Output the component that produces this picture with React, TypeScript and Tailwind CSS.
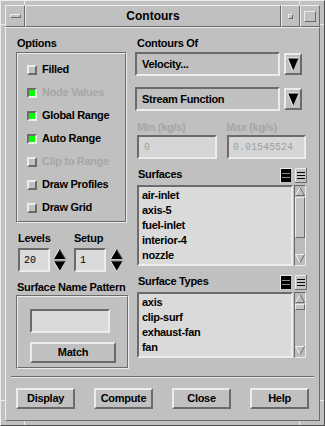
import React from 'react';

const R2 = 'border-2 border-t-[#ececec] border-l-[#ececec] border-r-[#6b6b6b] border-b-[#6b6b6b]';
const S2 = 'border-2 border-t-[#6b6b6b] border-l-[#6b6b6b] border-r-[#ececec] border-b-[#ececec]';
const R1 = 'border border-t-[#ececec] border-l-[#ececec] border-r-[#6b6b6b] border-b-[#6b6b6b]';
const S1 = 'border border-t-[#6b6b6b] border-l-[#6b6b6b] border-r-[#ececec] border-b-[#ececec]';

function Frame({ className, children }: { className: string; children: React.ReactNode }) {
  return (
    <div className={`${S1} ${className}`}>
      <div className={`${R1} h-full`}>{children}</div>
    </div>
  );
}

function Option({ label, on, disabled }: { label: string; on?: boolean; disabled?: boolean }) {
  return (
    <div className="h-[23px] flex items-center pl-[9px]">
      <span className={`w-[10px] h-[10px] ${on ? S2 + ' bg-[#00ff00]' : R2 + ' bg-[#c0c0c0]'}`} />
      <span className={`ml-[5px] ${disabled ? 'text-[#a6a6a6]' : 'text-black'}`}>{label}</span>
    </div>
  );
}

function Spinner() {
  return (
    <svg width="13" height="24" viewBox="0 0 13 24">
      <polygon points="6.5,1 12.5,11 0.5,11" fill="#000" />
      <polyline points="0.5,11 6.5,1" stroke="#e8e8e8" fill="none" />
      <polyline points="6.5,1 12.5,11" stroke="#5a5a5a" fill="none" />
      <polygon points="0.5,13 12.5,13 6.5,23" fill="#000" />
      <polyline points="0.5,13 12.5,13" stroke="#8a8a8a" fill="none" />
      <polyline points="0.5,13 6.5,23" stroke="#e8e8e8" fill="none" />
    </svg>
  );
}

function DropArrow() {
  return (
    <div className={`${R2} w-[18px] h-[22px] bg-[#c0c0c0] flex items-center justify-center`}>
      <svg width="12" height="15" viewBox="0 0 12 15">
        <polygon points="0.5,1 11.5,1 6,14" fill="#000" />
        <polyline points="0.5,1 11.5,1" stroke="#f4f4f4" fill="none" />
        <polyline points="0.5,1 6,14" stroke="#f4f4f4" fill="none" />
      </svg>
    </div>
  );
}

function Dropdown({ label }: { label: string }) {
  return (
    <div className="flex items-center">
      <div className={`${S2} w-[145px] h-[24px] flex items-center pl-[5px]`}>{label}</div>
      <div className="ml-[4px]">
        <DropArrow />
      </div>
    </div>
  );
}

function ListIcons() {
  return (
    <div className="flex gap-[3px] mt-[1px]">
      <svg width="12" height="15" viewBox="0 0 12 15">
        <rect x="0" y="0" width="12" height="15" fill="#c0c0c0" />
        <rect x="1" y="1" width="10" height="13" fill="#000" />
        <line x1="2" y1="5.5" x2="10" y2="5.5" stroke="#8a8a8a" />
        <line x1="2" y1="9.5" x2="10" y2="9.5" stroke="#8a8a8a" />
        <polyline points="0.5,15 0.5,0.5 12,0.5" stroke="#ececec" fill="none" />
      </svg>
      <svg width="12" height="15" viewBox="0 0 12 15">
        <rect x="0" y="0" width="12" height="15" fill="#c4c4c4" />
        <line x1="2" y1="4.5" x2="10" y2="4.5" stroke="#000" />
        <line x1="2" y1="7.5" x2="10" y2="7.5" stroke="#000" />
        <line x1="2" y1="10.5" x2="10" y2="10.5" stroke="#000" />
        <polyline points="0.5,15 0.5,0.5 12,0.5" stroke="#ececec" fill="none" />
        <polyline points="11.5,0 11.5,14.5 0,14.5" stroke="#6b6b6b" fill="none" />
      </svg>
    </div>
  );
}

function ScrollArrow({ up }: { up?: boolean }) {
  return (
    <svg width="10" height="9" viewBox="0 0 10 9" className="mx-auto">
      {up ? (
        <>
          <polygon points="5,0.5 9.5,8.5 0.5,8.5" fill="#c0c0c0" />
          <polyline points="0.5,8.5 5,0.5" stroke="#f0f0f0" fill="none" />
          <polyline points="5,0.5 9.5,8.5 0.5,8.5" stroke="#6b6b6b" fill="none" />
        </>
      ) : (
        <>
          <polygon points="0.5,0.5 9.5,0.5 5,8.5" fill="#c0c0c0" />
          <polyline points="0.5,0.5 9.5,0.5" stroke="#f0f0f0" fill="none" />
          <polyline points="0.5,0.5 5,8.5" stroke="#f0f0f0" fill="none" />
          <polyline points="9.5,0.5 5,8.5" stroke="#6b6b6b" fill="none" />
        </>
      )}
    </svg>
  );
}

function ListBox({ items, height, thumb }: { items: string[]; height: string; thumb: string }) {
  return (
    <div className={`flex ml-[2px] ${height}`}>
      <div className={`${S2} w-[156px] bg-[#dadada] pl-[3px] pt-[1px] overflow-hidden`}>
        {items.map((it) => (
          <div key={it} className="h-[15px] leading-[15px]">
            {it}
          </div>
        ))}
      </div>
      <div className={`${S1} ml-[1px] w-[12px] bg-[#bcbcbc] flex flex-col pt-[1px] pb-[2px]`}>
        <ScrollArrow up />
        <div className={`${R1} ${thumb} w-[10px] mt-[1px] bg-[#c4c4c4]`} />
        <div className="flex-1" />
        <ScrollArrow />
      </div>
    </div>
  );
}

function Button({ label, w }: { label: string; w: string }) {
  return (
    <div className={`${R2} ${w} h-[21px] bg-[#c0c0c0] flex items-center justify-center`}>{label}</div>
  );
}

export default function App() {
  return (
    <div className="w-[325px] h-[426px] bg-[#c0c0c0] relative font-['Liberation_Sans',sans-serif] font-bold text-[11px] tracking-[-0.3px] text-black border border-t-[#ececec] border-l-[#ececec] border-r-[#4a4a4a] border-b-[#4a4a4a] p-[4px]">
      {/* frame resize marks */}
      <div className="absolute left-[23px] top-0 w-px h-[4px] bg-[#ececec]" />
      <div className="absolute left-[298px] top-0 w-px h-[4px] bg-[#ececec]" />
      <div className="absolute left-[23px] bottom-0 w-px h-[4px] bg-[#ececec]" />
      <div className="absolute left-[298px] bottom-0 w-px h-[4px] bg-[#ececec]" />
      <div className="absolute left-0 top-[23px] w-[4px] h-px bg-[#ececec]" />
      <div className="absolute right-0 top-[23px] w-[4px] h-px bg-[#ececec]" />
      <div className="absolute left-0 top-[399px] w-[4px] h-px bg-[#ececec]" />
      <div className="absolute right-0 top-[399px] w-[4px] h-px bg-[#ececec]" />

      <div className="flex flex-col h-full">
        {/* title bar */}
        <div className="h-[22px] flex">
          <div className={`${R1} w-[20px] flex items-center justify-center`}>
            <span className={`${R1} w-[11px] h-[4px]`} />
          </div>
          <div className={`${R1} flex-1 flex items-center justify-center text-[12px] tracking-normal`}>
            Contours
          </div>
          <div className={`${R1} w-[19px] flex items-center justify-center`}>
            <span className={`${R1} w-[5px] h-[5px]`} />
          </div>
          <div className={`${R1} w-[20px] flex items-center justify-center`}>
            <span className={`${R1} w-[12px] h-[11px]`} />
          </div>
        </div>

        {/* client area */}
        <div className={`${R1} flex-1 flex flex-col`}>
          <div className="flex pl-[10px] pt-[8px]">
            {/* left column */}
            <div className="w-[113px] flex flex-col">
              <div className="h-[14px] leading-[14px] pl-[1px]">Options</div>
              <Frame className="mt-[2px] w-[111px] h-[171px]">
                <div className="pt-[4px]">
                  <Option label="Filled" />
                  <Option label="Node Values" on disabled />
                  <Option label="Global Range" on />
                  <Option label="Auto Range" on />
                  <Option label="Clip to Range" disabled />
                  <Option label="Draw Profiles" />
                  <Option label="Draw Grid" />
                </div>
              </Frame>

              <div className="flex mt-[8px] h-[14px] leading-[14px] pl-[2px]">
                <span className="w-[56px]">Levels</span>
                <span>Setup</span>
              </div>
              <div className="flex items-center mt-[3px] pl-[2px]">
                <div className={`${S2} w-[32px] h-[24px] bg-[#dadada] pl-[4px] flex items-center font-['Liberation_Mono',monospace] font-normal text-[10px] tracking-normal`}>
                  20
                </div>
                <div className="ml-[3px]">
                  <Spinner />
                </div>
                <div className={`${S2} ml-[8px] w-[32px] h-[24px] bg-[#dadada] pl-[4px] flex items-center font-['Liberation_Mono',monospace] font-normal text-[10px] tracking-normal`}>
                  1
                </div>
                <div className="ml-[4px]">
                  <Spinner />
                </div>
              </div>

              <div className="mt-[8px] h-[14px] leading-[14px] pl-[1px] whitespace-nowrap">Surface Name Pattern</div>
              <Frame className="mt-[1px] w-[113px] h-[74px]">
                <div className="pl-[12px] pt-[12px] flex flex-col">
                  <div className={`${S2} w-[80px] h-[24px] bg-[#dadada]`} />
                  <div className="mt-[9px]">
                    <Button label="Match" w="w-[86px]" />
                  </div>
                </div>
              </Frame>
            </div>

            {/* right column */}
            <div className="ml-[6px] w-[172px] flex flex-col">
              <div className="h-[14px] leading-[14px] pl-[2px]">Contours Of</div>
              <div className="mt-[2px]">
                <Dropdown label="Velocity..." />
              </div>
              <div className="mt-[11px]">
                <Dropdown label="Stream Function" />
              </div>

              <div className="flex mt-[9px] h-[14px] leading-[14px] pl-[2px] text-[#a6a6a6]">
                <span className="w-[89px]">Min (kg/s)</span>
                <span>Max (kg/s)</span>
              </div>
              <div className="flex mt-[1px] pl-[2px] font-['Liberation_Mono',monospace] font-normal text-[10px] tracking-normal text-[#a0a0a0]">
                <div className={`${S2} w-[80px] h-[24px] bg-[#d6d6d6] pl-[5px] flex items-center`}>0</div>
                <div className={`${S2} ml-[10px] w-[79px] h-[24px] bg-[#d6d6d6] pl-[4px] flex items-center`}>
                  0.01545524
                </div>
              </div>

              <div className="flex justify-between items-start mt-[8px] h-[17px] pl-[3px]">
                <span className="leading-[14px]">Surfaces</span>
                <ListIcons />
              </div>
              <div className="mt-[1px]">
                <ListBox
                  items={['air-inlet', 'axis-5', 'fuel-inlet', 'interior-4', 'nozzle']}
                  height="h-[81px]"
                  thumb="h-[41px]"
                />
              </div>

              <div className="flex justify-between items-start mt-[8px] h-[17px] pl-[3px]">
                <span className="leading-[14px]">Surface Types</span>
                <ListIcons />
              </div>
              <div className="mt-[1px]">
                <ListBox items={['axis', 'clip-surf', 'exhaust-fan', 'fan']} height="h-[66px]" thumb="h-[6px]" />
              </div>
            </div>
          </div>

          {/* separator */}
          <div className="mt-[7px] mx-[5px] h-[2px] border-t border-t-[#6b6b6b] border-b border-b-[#ececec]" />

          {/* buttons */}
          <div className="flex gap-[19px] pl-[10px] mt-[10px]">
            <Button label="Display" w="w-[59px]" />
            <Button label="Compute" w="w-[59px]" />
            <Button label="Close" w="w-[59px]" />
            <Button label="Help" w="w-[59px]" />
          </div>
        </div>
      </div>
    </div>
  );
}
